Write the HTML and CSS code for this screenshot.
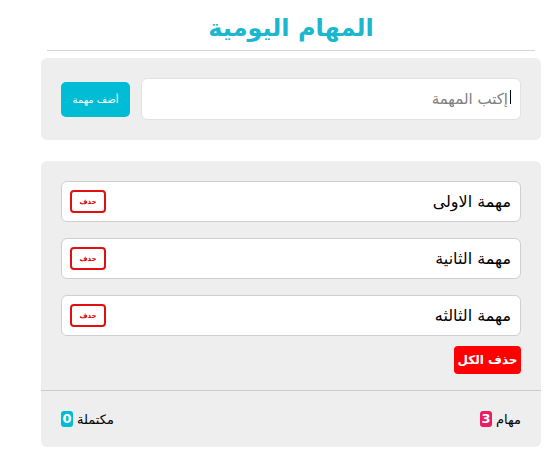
FILE: index.html
```html
<!DOCTYPE html>
<html lang="ar" dir="rtl">
<head>
<meta charset="utf-8">
<title>المهام اليومية</title>
<link rel="stylesheet" href="styles.css">
</head>
<body>
<div class="app">
  <h1 class="title">المهام اليومية</h1>
  <hr class="rule">
  <form class="panel add-panel">
    <div class="field">
      <input class="task-input" type="text" placeholder="إكتب المهمة">
    </div>
    <button class="add-btn" type="button">أضف مهمة</button>
  </form>
  <section class="panel list-panel">
    <div class="list">
      <div class="task"><span class="task-text">مهمة الاولى</span><button class="del-btn" type="button">حذف</button></div>
      <div class="task"><span class="task-text">مهمة الثانية</span><button class="del-btn" type="button">حذف</button></div>
      <div class="task"><span class="task-text">مهمة الثالثه</span><button class="del-btn" type="button">حذف</button></div>
    </div>
    <div class="actions">
      <button class="clear-btn" type="button">حذف الكل</button>
    </div>
    <div class="footer">
      <span class="stat">مهام <span class="badge badge-pink">3</span></span>
      <span class="stat">مكتملة <span class="badge badge-cyan">0</span></span>
    </div>
  </section>
</div>
</body>
</html>
```

FILE: styles.css
```css
* { box-sizing: border-box; }
body {
  margin: 8px;
  background: #ffffff;
  font-family: "DejaVu Sans", sans-serif;
  color: #000;
}
.app {
  width: 500px;
  margin-right: 9px;
  margin-left: 0;
}
.title {
  margin: 0;
  height: 42px;
  padding-top: 4px;
  text-align: center;
  font-family: "DejaVu Sans", sans-serif;
  font-weight: bold;
  font-size: 24px;
  line-height: 32px;
  color: #1bb7cf;
}
.rule {
  margin: 0 6px 7px;
  border: 0;
  border-top: 1px solid #d6d6d6;
  height: 0;
}
.panel {
  background: #eeeeee;
  border-radius: 6px;
}
.add-panel {
  display: flex;
  align-items: center;
  gap: 11px;
  padding: 20px;
  margin: 0 0 21px;
}
.field {
  position: relative;
  flex: 1;
}
.task-input {
  display: block;
  width: 100%;
  height: 42px;
  border: 1px solid #e2e2e2;
  border-radius: 6px;
  background: #fff;
  padding: 0 12px;
  font-family: "DejaVu Sans", sans-serif;
  font-size: 15px;
  outline: none;
}
.task-input::placeholder { color: #808080; }
.field::after {
  content: "";
  position: absolute;
  right: 10px;
  top: 12px;
  width: 1px;
  height: 14px;
  background: #000;
}
.add-btn {
  width: 69px;
  height: 35px;
  border: 0;
  border-radius: 5px;
  background: #00bcd4;
  color: #fff;
  font-family: "DejaVu Sans", sans-serif;
  font-size: 10px;
  padding: 0;
}
.list-panel {
  padding: 20px 0 0;
}
.list {
  display: flex;
  flex-direction: column;
  gap: 16px;
  padding: 0 20px;
}
.task {
  display: flex;
  align-items: center;
  justify-content: space-between;
  height: 41px;
  background: #fff;
  border: 1px solid #cfcfcf;
  border-radius: 6px;
  padding: 0 9px 0 8px;
}
.task-text {
  font-size: 16px;
}
.del-btn {
  width: 36px;
  height: 23px;
  border: 2px solid #e01010;
  border-radius: 4px;
  background: #fff;
  color: #d00;
  font-family: "DejaVu Sans", sans-serif;
  font-weight: bold;
  font-size: 7px;
  padding: 0;
}
.actions {
  display: flex;
  justify-content: flex-start;
  padding: 10px 20px 16px;
}
.clear-btn {
  width: 67px;
  height: 28px;
  border: 0;
  border-radius: 4px;
  background: #ff0000;
  color: #fff;
  font-family: "DejaVu Sans", sans-serif;
  font-weight: bold;
  font-size: 12px;
  padding: 0;
}
.footer {
  display: flex;
  justify-content: space-between;
  align-items: center;
  height: 57px;
  border-top: 1px solid #cccccc;
  padding: 0 20px;
  font-size: 13px;
}
.stat {
  display: flex;
  align-items: center;
  gap: 4px;
}
.badge {
  display: inline-block;
  width: 12px;
  height: 16px;
  border-radius: 3px;
  color: #fff;
  font-weight: bold;
  font-size: 13px;
  line-height: 16px;
  text-align: center;
}
.badge-pink { background: #e91e63; }
.badge-cyan { background: #00bcd4; }
```
